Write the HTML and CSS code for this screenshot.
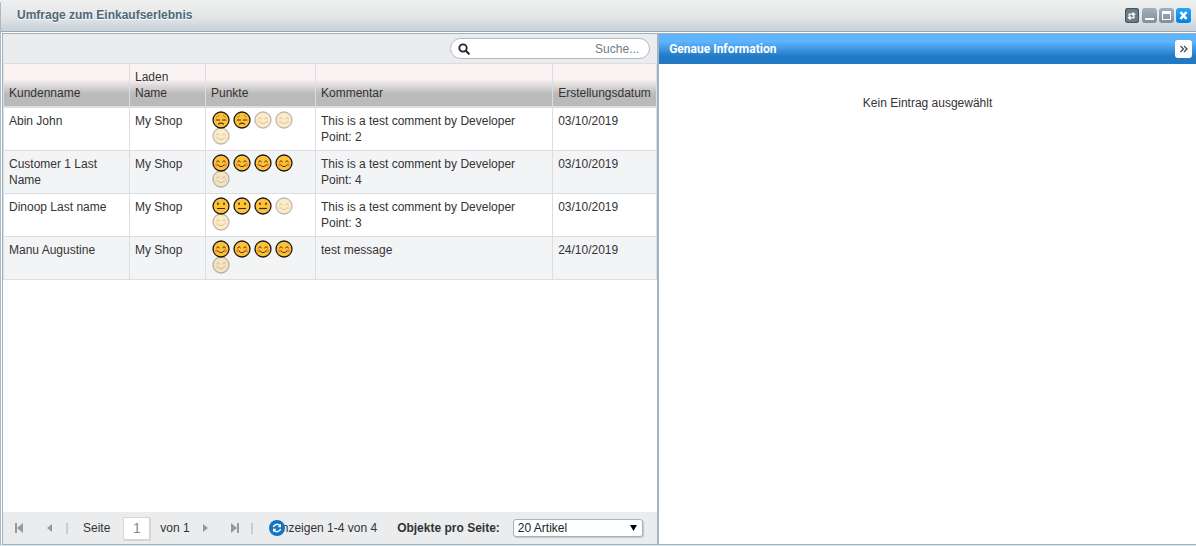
FILE: index.html
```
<!DOCTYPE html>
<html lang="de">
<head>
<meta charset="utf-8">
<title>Umfrage zum Einkaufserlebnis</title>
<link rel="stylesheet" href="styles.css">
</head>
<body>
<svg class="defs" aria-hidden="true">
  <defs>
    <g id="face"><circle cx="9" cy="9" r="8" fill="#fdc238" stroke="#1c1a17" stroke-width="1.3"/></g>
    <symbol id="happy" viewBox="0 0 18 18">
      <use href="#face"/>
      <circle cx="4.600" cy="10.800" r="1.600" fill="#fa8244"/><circle cx="13.400" cy="10.800" r="1.600" fill="#fa8244"/>
      <path d="M4.500 7.800q1.500-2.600 3 0M10.500 7.800q1.500-2.600 3 0M6 11q3 3.600 6 0" fill="none" stroke="#4d3510" stroke-width="1" stroke-linecap="round"/>
    </symbol>
    <symbol id="sad" viewBox="0 0 18 18">
      <use href="#face"/>
      <path d="M4 6.300q2.300-.4 3-2.600M14 6.300q-2.300-.4-3-2.600" fill="none" stroke="#d98b12" stroke-width="1.100"/>
      <path d="M4.200 9h3.400M10.400 9h3.400M6.500 13q2.500-1.800 5 0" fill="none" stroke="#4d3510" stroke-width="1.200" stroke-linecap="round"/>
    </symbol>
    <symbol id="neutral" viewBox="0 0 18 18">
      <use href="#face"/>
      <path d="M6 6.200v1M12 6.200v1" stroke="#3d2b10" stroke-width="1.600" stroke-linecap="round"/>
      <path d="M5 11.500h8" stroke="#3d2b10" stroke-width="1.200"/>
    </symbol>
  </defs>
</svg>
<div class="window">
  <header class="titlebar">
    <h1 class="title">Umfrage zum Einkaufserlebnis</h1>
    <div class="tools">
      <button class="tool tool-refresh" type="button" aria-label="Aktualisieren"><svg viewBox="0 0 15 15"><path d="M4.500 8V5.500h4M9.500 7v2.500h-4" fill="none" stroke="#fff" stroke-width="1.400"/><path d="M8 3l3.500 2.500L8 8zM6 7L2.500 9.500 6 12z" fill="#fff"/></svg></button>
      <button class="tool" type="button" aria-label="Minimieren"><svg viewBox="0 0 15 15"><path d="M3 10h9v2H3z" fill="#fff"/></svg></button>
      <button class="tool" type="button" aria-label="Maximieren"><svg viewBox="0 0 15 15"><path d="M3 3h9v9H3zM4 6v5h7V6z" fill="#fff" fill-rule="evenodd"/></svg></button>
      <button class="tool tool-close" type="button" aria-label="Schließen"><svg viewBox="0 0 15 15"><path d="M4.500 4l6 7M10.500 4l-6 7" stroke="#fff" stroke-width="2.600"/></svg></button>
    </div>
  </header>
  <main class="content">
    <section class="list">
      <div class="searchbar">
        <label class="search">
          <svg class="search-icon" viewBox="0 0 12 12"><circle cx="5" cy="5" r="3.700" fill="none" stroke="#20262b" stroke-width="1.800"/><path d="M7.800 7.800L10.800 10.800" stroke="#20262b" stroke-width="2" stroke-linecap="round"/></svg>
          <input class="search-input" type="text" placeholder="Suche..." aria-label="Suche">
        </label>
      </div>
      <div class="grid">
        <table class="table">
          <colgroup><col class="c-customer"><col class="c-shop"><col class="c-points"><col class="c-comment"><col class="c-date"></colgroup>
          <thead>
            <tr><th>Kundenname</th><th>Laden Name</th><th>Punkte</th><th>Kommentar</th><th>Erstellungsdatum</th></tr>
          </thead>
          <tbody>
            <tr><td>Abin John</td><td>My Shop</td><td><div class="rating"><svg><use href="#sad"/></svg><svg><use href="#sad"/></svg><svg class="off"><use href="#happy"/></svg><svg class="off"><use href="#happy"/></svg><svg class="off"><use href="#happy"/></svg></div></td><td>This is a test comment by Developer<br>Point: 2</td><td>03/10/2019</td></tr>
            <tr><td>Customer 1 Last Name</td><td>My Shop</td><td><div class="rating"><svg><use href="#happy"/></svg><svg><use href="#happy"/></svg><svg><use href="#happy"/></svg><svg><use href="#happy"/></svg><svg class="off"><use href="#happy"/></svg></div></td><td>This is a test comment by Developer<br>Point: 4</td><td>03/10/2019</td></tr>
            <tr><td>Dinoop Last name</td><td>My Shop</td><td><div class="rating"><svg><use href="#neutral"/></svg><svg><use href="#neutral"/></svg><svg><use href="#neutral"/></svg><svg class="off"><use href="#happy"/></svg><svg class="off"><use href="#happy"/></svg></div></td><td>This is a test comment by Developer<br>Point: 3</td><td>03/10/2019</td></tr>
            <tr><td>Manu Augustine</td><td>My Shop</td><td><div class="rating"><svg><use href="#happy"/></svg><svg><use href="#happy"/></svg><svg><use href="#happy"/></svg><svg><use href="#happy"/></svg><svg class="off"><use href="#happy"/></svg></div></td><td>test message</td><td>24/10/2019</td></tr>
          </tbody>
        </table>
      </div>
      <footer class="pager">
        <button class="nav" type="button" aria-label="Erste Seite"><svg viewBox="0 0 10 12"><path d="M1 1h2v10H1zM9 1v10L3 6z" fill="#999"/></svg></button>
        <button class="nav nav-prev" type="button" aria-label="Vorherige Seite"><svg viewBox="0 0 10 12"><path d="M7 2v8L2 6z" fill="#999"/></svg></button>
        <span class="sep"></span>
        <label class="page-label" for="page">Seite</label>
        <input class="page-input" id="page" type="text" value="1">
        <span class="page-total">von 1</span>
        <button class="nav nav-next" type="button" aria-label="Nächste Seite"><svg viewBox="0 0 10 12"><path d="M3 2v8l5-4z" fill="#999"/></svg></button>
        <button class="nav nav-last" type="button" aria-label="Letzte Seite"><svg viewBox="0 0 10 12"><path d="M7 1h2v10H7zM1 1v10l6-5z" fill="#999"/></svg></button>
        <span class="sep"></span>
        <div class="status">
          <span>Anzeigen 1-4 von 4</span>
          <button class="reload" type="button" aria-label="Neu laden"><svg viewBox="0 0 16 16"><circle cx="8" cy="8" r="8" fill="#1272c4"/><path d="M4.400 7.200A3.700 3.700 0 0 1 11 5.900M11.600 8.800A3.700 3.700 0 0 1 5 10.100" fill="none" stroke="#fff" stroke-width="1.500"/><path d="M12 3.800v3.500H8.500zM4 12.200V8.700h3.500z" fill="#fff"/></svg></button>
        </div>
        <label class="size-label" for="size">Objekte pro Seite:</label>
        <span class="select-box"><select class="size" id="size"><option>20 Artikel</option></select><svg class="caret" viewBox="0 0 8 7"><path d="M0 0h8L4 7z" fill="#000"/></svg></span>
      </footer>
    </section>
    <section class="detail">
      <div class="detail-head">
        <h2 class="detail-title">Genaue Information</h2>
        <button class="collapse" type="button" aria-label="Einklappen"><svg viewBox="0 0 17 18"><path d="M5.500 6l3 3-3 3M9 6l3 3-3 3" fill="none" stroke="#444" stroke-width="1.200"/></svg></button>
      </div>
      <p class="empty">Kein Eintrag ausgewählt</p>
    </section>
  </main>
</div>
</body>
</html>
```
FILE: styles.css
```
* { box-sizing: border-box; }
body {
  margin: 0;
  font: 12px/16px "Liberation Sans", Arial, sans-serif;
  color: #333;
}
button { padding: 0; border: 0; background: none; cursor: pointer; }
svg { display: block; }
.defs { position: absolute; width: 0; height: 0; }

.window {
  display: flex;
  flex-direction: column;
  height: 100vh;
  border-left: 1px solid #a9b9c6;
  border-bottom: 1px solid #d9e3ea;
  border-top-left-radius: 4px;
  overflow: hidden;
}
.titlebar {
  display: flex;
  align-items: center;
  justify-content: space-between;
  flex: none;
  height: 32px;
  padding: 0 5px 0 16px;
  background: linear-gradient(#f0f0ef, #e4e7e9 50%, #c8d1d8);
  border-bottom: 1px solid #98a9b6;
}
.title {
  margin: 0;
  padding-bottom: 2px;
  font-size: 12px;
  color: #4f6777;
  text-shadow: 0 1px 0 #fff;
}
.tools { display: flex; gap: 2px; }
.tool {
  width: 15px;
  height: 15px;
  border-radius: 3px;
  background: linear-gradient(#a2b0ba, #7e909d);
}
.tool-refresh { width: 14px; margin-right: 1px; background: #6b7a87; box-shadow: inset 0 0 0 1px #465460; }
.tool-close { background: linear-gradient(#2ba5f5, #0583df); }

.content {
  display: flex;
  flex: 1;
  min-height: 0;
  margin: 1px 0 0 1px;
  border: solid #9fb2c0;
  border-width: 1px 0 1px 1px;
}
.list {
  display: flex;
  flex-direction: column;
  flex: 0 0 55%;
  min-width: 0;
  border-right: 2px solid #a3b3bf;
}
.searchbar {
  display: flex;
  justify-content: flex-end;
  flex: none;
  padding: 4px 7px;
  background: #ebecee;
}
.search {
  display: flex;
  align-items: center;
  width: 200px;
  height: 21px;
  padding: 0 10px 0 7px;
  border: 1px solid #b5b8bb;
  border-radius: 11px;
  background: #fff;
}
.search-icon { flex: none; width: 12px; height: 12px; }
.search-input {
  flex: 1;
  min-width: 0;
  padding: 0;
  border: 0;
  outline: 0;
  background: none;
  font: inherit;
  text-align: right;
}
.search-input::placeholder { color: #6f7a84; opacity: 1; }

.grid { flex: 1; min-height: 0; overflow: auto; }
.table { width: 100%; table-layout: fixed; border-collapse: collapse; }
.c-customer { width: 126px; }
.c-shop { width: 76px; }
.c-points { width: 110px; }
.c-date { width: 104px; }
.table th, .table td {
  height: 43px;
  padding: 5px;
  border: 1px solid #dadee3;
  vertical-align: top;
  text-align: left;
}
.table th { vertical-align: bottom; font-weight: normal; white-space: normal; border-bottom: 2px solid #dadee3; }
.table thead tr { background: linear-gradient(#faf3f4 34%, #bababa 68%); }
.table tbody tr:nth-child(even) { background: #f3f4f6; }
.rating { display: flex; flex-wrap: wrap; column-gap: 3px; margin: -2px 0 -2px 1px; }
.rating svg { width: 18px; height: 18px; margin-bottom: -2px; }
.off { opacity: .3; }

.pager {
  display: flex;
  align-items: center;
  flex: none;
  height: 32px;
  padding-left: 11px;
  background: #ebecee;
}
.nav { flex: none; width: 10px; height: 12px; }
.nav svg { width: 10px; height: 12px; }
.nav-prev { margin-left: 21px; }
.nav-next { margin-left: 10px; }
.nav-last { margin-left: 20px; }
.sep { flex: none; width: 2px; height: 11px; margin-left: 11px; background: #ccc; }
.page-label { margin-left: 15px; }
.page-input {
  width: 27px;
  height: 23px;
  margin: 0 10px 0 13px;
  padding: 0;
  border: 1px solid #d5d5d5;
  box-shadow: 1px 1px 0 #d5d6d8;
  background: #fff;
  font: 14px/20px "Liberation Sans", Arial, sans-serif;
  color: #888;
  text-align: center;
}
.status { position: relative; margin-left: 21px; white-space: nowrap; }
.reload { position: absolute; left: -5px; top: 0; width: 16px; height: 16px; }
.reload svg { width: 16px; height: 16px; }
.size-label { margin: 0 13px 0 20px; font-weight: bold; white-space: nowrap; }
.select-box { position: relative; }
.size {
  display: block;
  appearance: none;
  width: 130px;
  height: 18px;
  padding: 0 18px 0 4px;
  border: 1px solid #a3b3c0;
  border-radius: 3px;
  box-shadow: 1px 1px 1px #c4c8cc;
  background: #fff;
  font: inherit;
  color: #222;
}
.caret { position: absolute; right: 6px; top: 6px; width: 7px; height: 6px; pointer-events: none; }

.detail { flex: 1; min-width: 0; }
.detail-head {
  display: flex;
  align-items: center;
  justify-content: space-between;
  height: 30px;
  padding: 0 4px 0 10px;
  background: linear-gradient(#5fb4fe 25%, #2179c3 75%);
}
.detail-title { margin: 0; font: bold 12px/16px Roboto, "Liberation Sans", sans-serif; color: #fff; }
.collapse { width: 17px; height: 18px; border-radius: 3px; background: #fff; }
.empty { margin: 31px 0 0; text-align: center; }
```
